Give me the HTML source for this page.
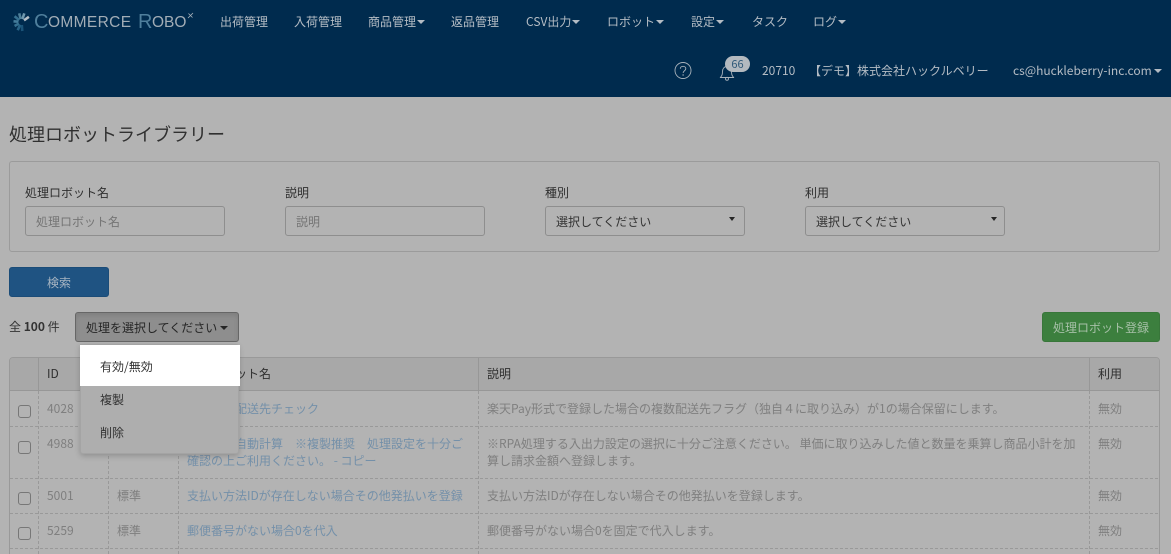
<!DOCTYPE html>
<html lang="ja"><head><meta charset="utf-8"><title>処理ロボットライブラリー</title>
<style>
html,body{margin:0;padding:0;width:1171px;height:554px;overflow:hidden;background:#b3b3b3}
#w{width:1171px;height:554px;overflow:hidden;position:relative;background:#b3b3b3;font-family:"Noto Sans CJK JP","Liberation Sans",sans-serif;font-size:12px;color:#2f2f2f;filter:blur(.3px)}
.t{position:absolute;white-space:nowrap;line-height:18px}
.b{position:absolute;box-sizing:border-box}
.n{color:#b4bcc4;top:13px}
.u{color:#b4bcc4;top:62px}
.car{display:inline-block;width:0;height:0;border-left:4px solid transparent;border-right:4px solid transparent;border-top:4px solid currentColor;vertical-align:2px;margin-left:1px}
.in{border:1px solid #8e8e8e;border-radius:3px;height:30px;top:206px;background:#b3b3b3}
.sa{position:absolute;width:0;height:0;border-left:3.5px solid transparent;border-right:3.5px solid transparent;border-top:4px solid #262626;top:217px}
.h{height:1px;left:10px;width:1150px;background-image:linear-gradient(90deg,#999 0 3px,transparent 3px 5px);background-size:5px 1px}
.v{width:1px;background-image:linear-gradient(180deg,#999 0 3px,transparent 3px 5px);background-size:1px 5px;top:391px;height:163px}
.vh{width:1px;background:#979797;top:358px;height:33px}
.g{color:#7f7f7f}.l{color:#7490a9}
.cb{position:absolute;left:18px;width:11px;height:11px;border:1px solid #777;border-radius:3px;background:#b3b3b3}
.mi{color:#333;left:100px}
</style></head><body><div id="w">

<div class="b" style="left:0;top:0;width:1171px;height:97px;background:#002b4e"></div>

<svg class="b" style="left:13px;top:12px;overflow:visible" width="18" height="20" viewBox="0 0 18 20">
<g fill="none" stroke-width="2.600">
<path d="M11 8.300L15.900 4.800" stroke="#b4bec6"/>
<path d="M9.400 7.100L11.300 1.400" stroke="#6f98ae"/>
<path d="M7.700 7.100L6.200 1.300" stroke="#4f8099"/>
<path d="M6.200 8.100L1.600 4.200" stroke="#357090"/>
<path d="M5.500 9.700L.5 9.300" stroke="#447c9b"/>
<path d="M5.900 11.500L1.600 14" stroke="#357090"/>
<path d="M7.200 12.700L4.700 18.200" stroke="#276387"/>
<path d="M8.800 13L9.300 19" stroke="#1a5378"/>
</g>
</svg>
<div class="t" style="left:34px;top:9px;line-height:26px;font-size:20px;color:#4f7f9c;font-family:'Liberation Sans',sans-serif">C</div>
<div class="t" style="left:48px;top:11px;line-height:24px;font-size:15.5px;color:#a2adb6;letter-spacing:.35px;font-family:'Liberation Sans',sans-serif">OMMERCE</div>
<div class="t" style="left:138px;top:9px;line-height:26px;font-size:20px;color:#4f7f9c;font-family:'Liberation Sans',sans-serif">R</div>
<div class="t" style="left:152px;top:11px;line-height:24px;font-size:15.5px;color:#a2adb6;font-family:'Liberation Sans',sans-serif">OBO</div>
<svg class="b" style="left:187px;top:12px" width="7" height="7" viewBox="0 0 7 7"><path d="M1 6L3.500 3.500L6 1M1.500 1.500L5.500 5.500" stroke="#aab4bc" stroke-width=".8" fill="none"/></svg>

<div class="t n" style="left:220px">出荷管理</div>
<div class="t n" style="left:294px">入荷管理</div>
<div class="t n" style="left:368px">商品管理<span class="car"></span></div>
<div class="t n" style="left:451px">返品管理</div>
<div class="t n" style="left:526px">CSV出力<span class="car"></span></div>
<div class="t n" style="left:607px">ロボット<span class="car"></span></div>
<div class="t n" style="left:691px">設定<span class="car"></span></div>
<div class="t n" style="left:752px">タスク</div>
<div class="t n" style="left:813px">ログ<span class="car"></span></div>

<svg class="b" style="left:674px;top:62px" width="18" height="18" viewBox="0 0 18 18">
<circle cx="9" cy="8.500" r="8" fill="none" stroke="#a8b2bb" stroke-width=".9"/>
<path d="M6.300 6.800C6.300 5.200 7.500 4.300 9 4.300C10.600 4.300 11.800 5.300 11.800 6.700C11.800 8.700 9.100 8.800 9.100 11" fill="none" stroke="#a8b2bb" stroke-width=".9"/>
<circle cx="9.100" cy="13" r=".7" fill="#a8b2bb"/>
</svg>
<svg class="b" style="left:719px;top:62px" width="18" height="19" viewBox="0 0 18 19">
<path d="M1 15.500C3 14.500 3.500 12.500 3.500 9.500C3.500 6.500 5.300 4.500 8 4.500C10.700 4.500 12.500 6.500 12.500 9.500C12.500 12.500 13 14.500 15 15.500Z" fill="none" stroke="#a8b2bb" stroke-width=".9"/>
<circle cx="8" cy="16.800" r="1.500" fill="none" stroke="#a8b2bb" stroke-width=".9"/>
</svg>
<div class="b" style="left:725px;top:56px;width:25px;height:16px;border-radius:8px;background:#b3b9bf;color:#2f5878;font-size:11px;line-height:16px;text-align:center">66</div>
<div class="t u" style="left:762px">20710</div>
<div class="t u" style="left:809px">【デモ】株式会社ハックルベリー</div>
<div class="t u" style="left:1013px">cs@huckleberry-inc.com<span class="car" style="margin-left:2px"></span></div>

<div class="t" style="left:9px;top:122px;font-size:18px;line-height:24px;color:#303030">処理ロボットライブラリー</div>

<div class="b" style="left:9px;top:161px;width:1151px;height:91px;border:1px solid #9b9b9b;border-radius:3px"></div>
<div class="t" style="left:25px;top:184px">処理ロボット名</div>
<div class="t" style="left:285px;top:184px">説明</div>
<div class="t" style="left:545px;top:184px">種別</div>
<div class="t" style="left:805px;top:184px">利用</div>
<div class="b in" style="left:25px;width:200px"></div>
<div class="b in" style="left:285px;width:200px"></div>
<div class="b in" style="left:545px;width:200px"></div>
<div class="b in" style="left:805px;width:200px"></div>
<div class="t" style="left:36px;top:213px;color:#757575">処理ロボット名</div>
<div class="t" style="left:296px;top:213px;color:#757575">説明</div>
<div class="t" style="left:556px;top:213px;color:#333">選択してください</div>
<div class="t" style="left:816px;top:213px;color:#333">選択してください</div>
<div class="sa" style="left:729px"></div>
<div class="sa" style="left:991px"></div>

<div class="b" style="left:9px;top:267px;width:100px;height:30px;background:#1f5382;border:1px solid #1b4c78;border-radius:3px;color:#a8b5c2;text-align:center;line-height:30px">検索</div>

<div class="t" style="left:9px;top:318px;color:#333">全 <b>100</b> 件</div>
<div class="b" style="left:75px;top:312px;width:164px;height:30px;background:#8e8e8e;border:1px solid #666;border-radius:3px;color:#262626;line-height:29px;padding-left:10px;white-space:nowrap;box-shadow:inset 0 3px 5px rgba(0,0,0,.1)">処理を選択してください<span class="car" style="margin-left:3px"></span></div>
<div class="b" style="left:1042px;top:312px;width:118px;height:30px;background:#3c7f3e;border:1px solid #38763a;border-radius:3px;color:#a7c0a8;text-align:center;line-height:29px;white-space:nowrap">処理ロボット登録</div>

<!-- table -->
<div class="b" style="left:9px;top:357px;width:1151px;height:210px;border:1px solid #999;border-radius:4px 4px 0 0"></div>
<div class="b" style="left:10px;top:358px;width:1149px;height:33px;background:#a8a8a8;border-radius:3px 3px 0 0;border-bottom:1px solid #979797"></div>
<div class="b vh" style="left:38px"></div>
<div class="b vh" style="left:108px"></div>
<div class="b vh" style="left:178px"></div>
<div class="b vh" style="left:478px"></div>
<div class="b vh" style="left:1089px"></div>
<div class="b v" style="left:38px"></div>
<div class="b v" style="left:108px"></div>
<div class="b v" style="left:178px"></div>
<div class="b v" style="left:478px"></div>
<div class="b v" style="left:1089px"></div>
<div class="b h" style="top:426px"></div>
<div class="b h" style="top:478px"></div>
<div class="b h" style="top:513px"></div>
<div class="b h" style="top:548px"></div>

<div class="t" style="left:47px;top:365px">ID</div>
<div class="t" style="left:187px;top:365px">処理ロボット名</div>
<div class="t" style="left:487px;top:365px">説明</div>
<div class="t" style="left:1098px;top:365px">利用</div>

<div class="cb" style="top:405px"></div>
<div class="t g" style="left:47px;top:400px">4028</div>
<div class="t l" style="left:187px;top:400px">楽天複数配送先チェック</div>
<div class="t g" style="left:487px;top:400px">楽天Pay形式で登録した場合の複数配送先フラグ（独自４に取り込み）が1の場合保留にします。</div>
<div class="t g" style="left:1098px;top:400px">無効</div>

<div class="cb" style="top:441px"></div>
<div class="t g" style="left:47px;top:435px">4988</div>
<div class="t l" style="left:187px;top:435px">商品小計自動計算　※複製推奨　処理設定を十分ご</div>
<div class="t l" style="left:187px;top:452px">確認の上ご利用ください。 - コピー</div>
<div class="t g" style="left:487px;top:435px">※RPA処理する入出力設定の選択に十分ご注意ください。 単価に取り込みした値と数量を乗算し商品小計を加</div>
<div class="t g" style="left:487px;top:452px">算し請求金額へ登録します。</div>
<div class="t g" style="left:1098px;top:435px">無効</div>

<div class="cb" style="top:492px"></div>
<div class="t g" style="left:47px;top:487px">5001</div>
<div class="t g" style="left:117px;top:487px">標準</div>
<div class="t l" style="left:187px;top:487px">支払い方法IDが存在しない場合その他発払いを登録</div>
<div class="t g" style="left:487px;top:487px">支払い方法IDが存在しない場合その他発払いを登録します。</div>
<div class="t g" style="left:1098px;top:487px">無効</div>

<div class="cb" style="top:527px"></div>
<div class="t g" style="left:47px;top:522px">5259</div>
<div class="t g" style="left:117px;top:522px">標準</div>
<div class="t l" style="left:187px;top:522px">郵便番号がない場合0を代入</div>
<div class="t g" style="left:487px;top:522px">郵便番号がない場合0を固定で代入します。</div>
<div class="t g" style="left:1098px;top:522px">無効</div>

<!-- dropdown -->
<div class="b" style="left:80px;top:344px;width:159px;height:110px;background:#aeaeae;border-radius:0 3px 3px 3px;box-shadow:0 2px 6px rgba(0,0,0,.2);border:1px solid #a4a4a4"></div>
<div class="b" style="left:80px;top:345px;width:160px;height:41px;background:#fff"></div>
<div class="t mi" style="top:358px">有効/無効</div>
<div class="t mi" style="top:391px">複製</div>
<div class="t mi" style="top:424px">削除</div>
</div></body></html>
